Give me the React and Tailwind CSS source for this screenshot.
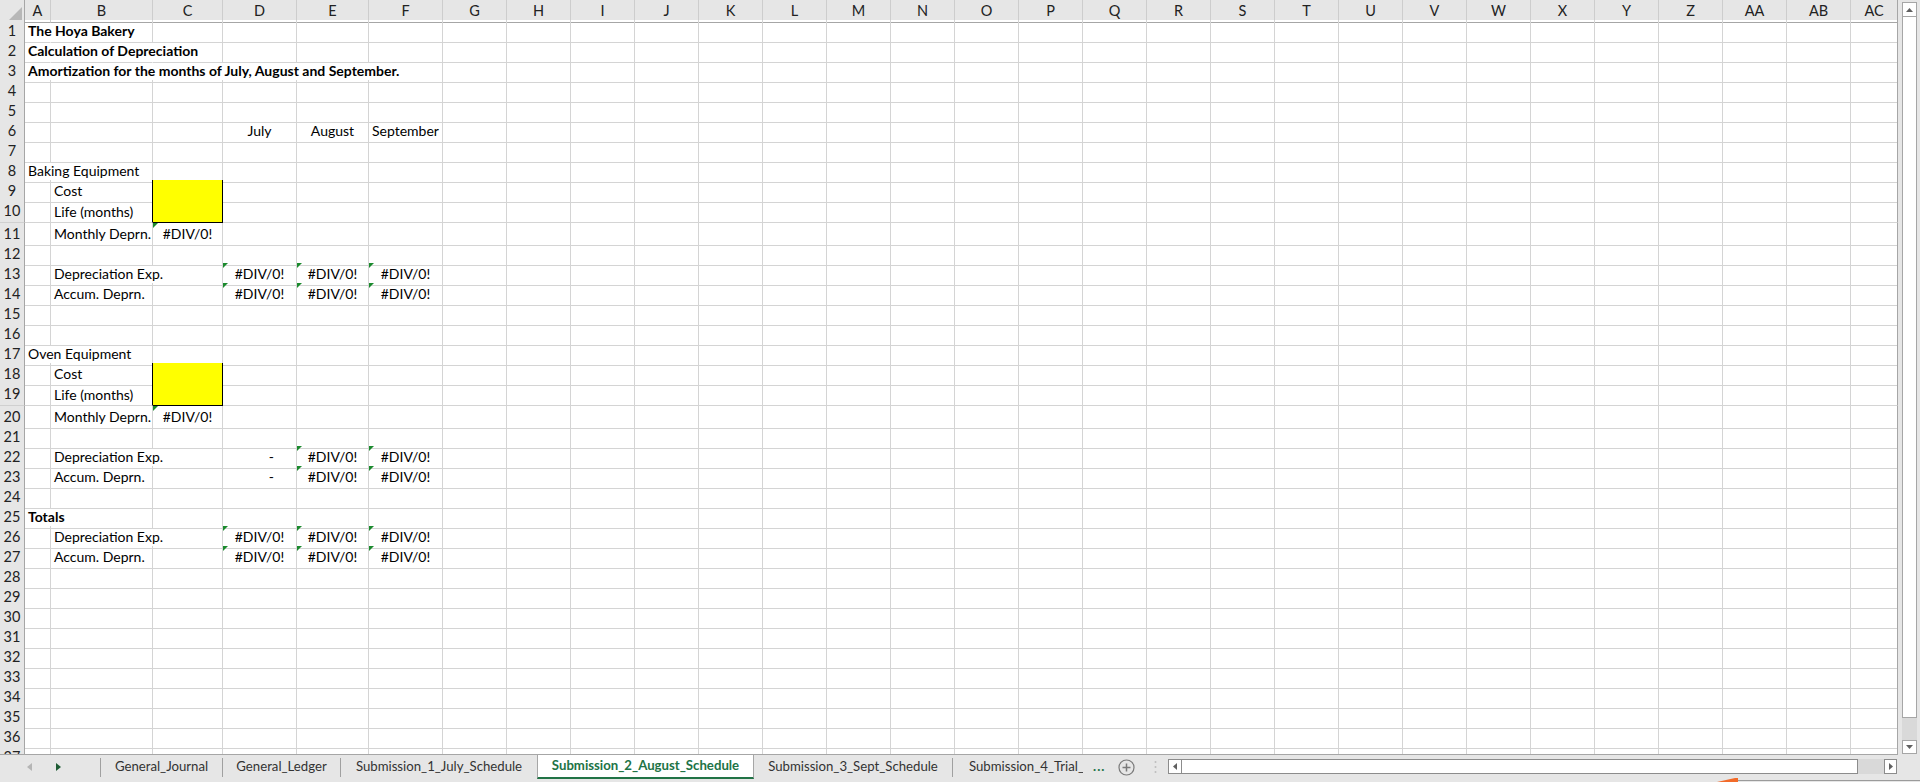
import React from "react";

const LETTERS = "A B C D E F G H I J K L M N O P Q R S T U V W X Y Z AA AB AC".split(" ");
const GRID = "grid grid-cols-[25px_26px_102px_70px_74px_72px_74px_repeat(22,64px)_47px]";
const TALL = [10, 19];

const err = { t: "#DIV/0!", align: "center", flag: true };
const errs3 = { 3: err, 4: err, 5: err };

// row number -> cells by column index (0 = A) and columns whose gridline is covered by text
const ROWS = {
  1: { cells: { 0: { t: "The Hoya Bakery", bold: true } }, over: [0] },
  2: { cells: { 0: { t: "Calculation of Depreciation", bold: true } }, over: [0, 1] },
  3: {
    cells: { 0: { t: "Amortization for the months of July, August and September.", bold: true } },
    over: [0, 1, 2, 3, 4],
  },
  6: {
    cells: {
      3: { t: "July", align: "center" },
      4: { t: "August", align: "center" },
      5: { t: "September", align: "center" },
    },
  },
  8: { cells: { 0: { t: "Baking Equipment" }, 2: { b: "border-b-black" } }, over: [0] },
  9: { cells: { 1: { t: "Cost", r: "border-r-black" }, 2: { yellow: true } } },
  10: { cells: { 1: { t: "Life (months)", r: "border-r-black" }, 2: { yellow: true } } },
  11: { cells: { 1: { t: "Monthly Deprn." }, 2: err } },
  13: { cells: { 1: { t: "Depreciation Exp." }, ...errs3 }, over: [1] },
  14: { cells: { 1: { t: "Accum. Deprn." }, ...errs3 } },
  17: { cells: { 0: { t: "Oven Equipment" }, 2: { b: "border-b-black" } }, over: [0] },
  18: { cells: { 1: { t: "Cost", r: "border-r-black" }, 2: { yellow: true } } },
  19: { cells: { 1: { t: "Life (months)", r: "border-r-black" }, 2: { yellow: true } } },
  20: { cells: { 1: { t: "Monthly Deprn." }, 2: err } },
  22: {
    cells: { 1: { t: "Depreciation Exp." }, 3: { t: "-", align: "right" }, 4: err, 5: err },
    over: [1],
  },
  23: { cells: { 1: { t: "Accum. Deprn." }, 3: { t: "-", align: "right" }, 4: err, 5: err } },
  25: { cells: { 0: { t: "Totals", bold: true } }, over: [0] },
  26: { cells: { 1: { t: "Depreciation Exp." }, ...errs3 }, over: [1] },
  27: { cells: { 1: { t: "Accum. Deprn." }, ...errs3 } },
};

function Cell({ col, spec, covered }) {
  const last = col === LETTERS.length - 1;
  let r = covered ? "border-r-transparent" : "border-r-[#d4d4d4]";
  if (last) r = "border-r-[#a6a6a6]";
  if (spec?.r) r = spec.r;
  let b = spec?.b || "border-b-[#d4d4d4]";
  if (spec?.yellow) {
    r = "border-r-black";
    b = "border-b-black";
  }
  const align =
    spec?.align === "center"
      ? "justify-center"
      : spec?.align === "right"
        ? "justify-end pr-[22px]"
        : "justify-start pl-[3px]";

  return (
    <div
      className={`relative flex items-center border-r border-b ${r} ${b} ${align} ${
        spec?.yellow ? "bg-[#ffff00]" : ""
      }`}
    >
      {spec?.flag && (
        <span className="absolute top-0 left-0 w-0 h-0 border-t-[5px] border-t-[#1b8a2e] border-r-[5px] border-r-transparent" />
      )}
      {spec?.t && (
        <span className={`whitespace-nowrap leading-[19px] ${spec.bold ? "font-bold" : ""}`}>{spec.t}</span>
      )}
    </div>
  );
}

function Row({ n }) {
  const row = ROWS[n] || { cells: {} };
  const over = row.over || [];
  return (
    <div className={`${GRID} ${TALL.includes(n) ? "h-[23px]" : "h-[20px]"}`}>
      <div className="flex items-center justify-center bg-[#e6e6e6] border-r border-b border-r-[#a6a6a6] border-b-[#d0d0d0] text-[#222] text-[14.5px]">
        {n}
      </div>
      {LETTERS.map((l, i) => (
        <Cell key={l} col={i} spec={row.cells[i]} covered={over.includes(i)} />
      ))}
    </div>
  );
}

function HeaderRow() {
  return (
    <div className={`${GRID} h-[20px] bg-[#e6e6e6]`}>
      <div className="flex items-end justify-end border-r border-b border-r-[#a6a6a6] border-b-[#a6a6a6] pr-[2px] pb-[2px]">
        <svg width="13" height="13" viewBox="0 0 13 13">
          <polygon points="13,0 13,13 0,13" fill="#b7b7b7" />
        </svg>
      </div>
      {LETTERS.map((l, i) => (
        <div
          key={l}
          className={`flex items-center justify-center border-r border-b border-b-[#a6a6a6] text-[14.5px] text-[#222] ${
            i === LETTERS.length - 1 ? "border-r-[#a6a6a6]" : "border-r-[#cdcdcd]"
          }`}
        >
          {l}
        </div>
      ))}
    </div>
  );
}

function VScroll() {
  return (
    <div className="w-[22px] h-full bg-[#e6e6e6] pl-[4px] pt-[2px] flex flex-col">
      <div className="w-[15px] h-[15px] bg-white border border-[#a6a6a6] flex items-center justify-center">
        <svg width="7" height="4" viewBox="0 0 7 4">
          <polygon points="0,4 7,4 3.5,0" fill="#606060" />
        </svg>
      </div>
      <div className="w-[15px] h-[701px] bg-white border border-t-0 border-[#a6a6a6]" />
      <div className="w-[15px] h-[22px] bg-[#d9d9d9]" />
      <div className="w-[15px] h-[14px] bg-white border border-[#a6a6a6] flex items-center justify-center">
        <svg width="7" height="4" viewBox="0 0 7 4">
          <polygon points="0,0 7,0 3.5,4" fill="#606060" />
        </svg>
      </div>
    </div>
  );
}

function Sep() {
  return <div className="w-px h-[19px] bg-[#a0a0a0] self-center mb-[3px]" />;
}

function Tab({ label, w }) {
  return (
    <div className={`${w} h-full flex items-center justify-center pb-[3px] text-[13.2px] text-[#333] whitespace-nowrap`}>
      {label}
    </div>
  );
}

function TabBar() {
  return (
    <div className="relative h-[27px] flex bg-[#e6e6e6]">
      <div className="w-[100px] flex items-center pb-[3px]">
        <svg className="ml-[27px]" width="5" height="8" viewBox="0 0 5 8">
          <polygon points="5,0 5,8 0,4" fill="#b5b5b5" />
        </svg>
        <svg className="ml-[24px]" width="5" height="8" viewBox="0 0 5 8">
          <polygon points="0,0 0,8 5,4" fill="#1e5c34" />
        </svg>
      </div>
      <Sep />
      <Tab label="General_Journal" w="w-[121px]" />
      <Sep />
      <Tab label="General_Ledger" w="w-[117px]" />
      <Sep />
      <Tab label="Submission_1_July_Schedule" w="w-[196px]" />
      <div className="w-[217px] h-[24px] bg-white border-l border-r border-[#a6a6a6] border-b-[2px] border-b-[#217346] flex items-center justify-center text-[13.2px] font-bold text-[#217346] whitespace-nowrap">
        Submission_2_August_Schedule
      </div>
      <Tab label="Submission_3_Sept_Schedule" w="w-[198px]" />
      <Sep />
      <div className="w-[215px] h-full flex items-center pb-[3px] pl-[16px] text-[13.2px] text-[#333] whitespace-nowrap">
        <span className="w-[114px] overflow-hidden">Submission_4_Trial_Balance</span>
        <span className="ml-[10px] text-[#217346] font-bold tracking-[1px]">...</span>
        <svg className="ml-[13px]" width="17" height="17" viewBox="0 0 17 17">
          <circle cx="8.5" cy="8.5" r="7.5" fill="none" stroke="#7a7a7a" strokeWidth="1.2" />
          <path d="M8.5 4.5v8M4.5 8.5h8" stroke="#7a7a7a" strokeWidth="1.5" />
        </svg>
        <svg className="ml-[19px]" width="3" height="14" viewBox="0 0 3 14">
          <circle cx="1.5" cy="2" r="1" fill="#bdbdbd" />
          <circle cx="1.5" cy="7" r="1" fill="#bdbdbd" />
          <circle cx="1.5" cy="12" r="1" fill="#bdbdbd" />
        </svg>
      </div>
      <div className="h-full flex items-center pb-[4px]">
        <div className="flex h-[15px] w-[729px]">
          <div className="w-[14px] h-full bg-white border border-[#8c8c8c] flex items-center justify-center">
            <svg width="4" height="7" viewBox="0 0 4 7">
              <polygon points="4,0 4,7 0,3.5" fill="#606060" />
            </svg>
          </div>
          <div className="w-[676px] h-full bg-white border border-l-0 border-[#8c8c8c]" />
          <div className="w-[26px] h-full bg-[#d9d9d9]" />
          <div className="w-[13px] h-full bg-white border border-[#8c8c8c] flex items-center justify-center">
            <svg width="4" height="7" viewBox="0 0 4 7">
              <polygon points="0,0 0,7 4,3.5" fill="#606060" />
            </svg>
          </div>
        </div>
      </div>
      {/* bit of the window below peeking in */}
      <svg className="absolute left-[1717px] bottom-0" width="203" height="4" viewBox="0 0 203 4">
        <polygon points="0,4 18,0 21,0 21,4" fill="#f26b2a" />
        <rect x="21" y="2" width="182" height="1" fill="#9b9b9b" />
      </svg>
    </div>
  );
}

export default function App() {
  const rows = Array.from({ length: 37 }, (_, i) => i + 1);
  return (
    <div className="w-[1920px] h-[782px] overflow-hidden flex flex-col bg-[#e6e6e6] text-black font-[Lato,'Liberation_Sans',sans-serif] text-[14px]">
      <div className="flex h-[755px]">
        <div className="w-[1898px] h-full overflow-hidden bg-white border-b border-b-[#a6a6a6]">
          <HeaderRow />
          {rows.map((n) => (
            <Row key={n} n={n} />
          ))}
        </div>
        <VScroll />
      </div>
      <TabBar />
    </div>
  );
}
